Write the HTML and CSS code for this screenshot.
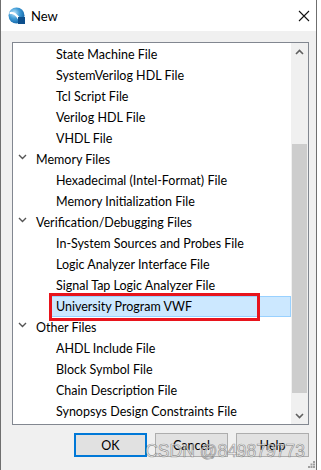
FILE: index.html
```html
<!DOCTYPE html>
<html>
<head>
<meta charset="utf-8">
<link rel="stylesheet" href="styles.css">
</head>
<body>
<div class="window">
  <div class="titlebar">
    <svg class="appicon" width="18" height="18" viewBox="0 0 18 18">
      <defs>
        <radialGradient id="g" cx="0.35" cy="0.35" r="0.7">
          <stop offset="0" stop-color="#bfe6fb"/>
          <stop offset="0.5" stop-color="#3f9bd6"/>
          <stop offset="1" stop-color="#1466a8"/>
        </radialGradient>
      </defs>
      <circle cx="8.5" cy="8.5" r="8" fill="url(#g)"/>
      <path d="M2.5 6 C5 5 9 8 11 12" stroke="#ffffff" stroke-width="2.2" fill="none" stroke-linecap="round"/>
      <rect x="10" y="10" width="7" height="7" fill="#0d4f8c"/>
    </svg>
    <span class="title">New</span>
    <svg class="close" width="12" height="12" viewBox="0 0 12 12">
      <path d="M1 1 L11 11 M11 1 L1 11" stroke="#111" stroke-width="1.1"/>
    </svg>
  </div>
  <div class="body">
    <div class="listbox">
      <div class="tree">
        <div class="row child">State Machine File</div>
        <div class="row child">SystemVerilog HDL File</div>
        <div class="row child">Tcl Script File</div>
        <div class="row child">Verilog HDL File</div>
        <div class="row child">VHDL File</div>
        <div class="row cat"><svg class="chev" width="9" height="6" viewBox="0 0 9 6"><path d="M1 1 L4.5 4.5 L8 1" stroke="#555" stroke-width="1.4" fill="none"/></svg>Memory Files</div>
        <div class="row child">Hexadecimal (Intel-Format) File</div>
        <div class="row child">Memory Initialization File</div>
        <div class="row cat"><svg class="chev" width="9" height="6" viewBox="0 0 9 6"><path d="M1 1 L4.5 4.5 L8 1" stroke="#555" stroke-width="1.4" fill="none"/></svg>Verification/Debugging Files</div>
        <div class="row child">In-System Sources and Probes File</div>
        <div class="row child">Logic Analyzer Interface File</div>
        <div class="row child">Signal Tap Logic Analyzer File</div>
        <div class="row selwrap"><div class="selected">University Program VWF</div><div class="redbox"></div></div>
        <div class="row cat"><svg class="chev" width="9" height="6" viewBox="0 0 9 6"><path d="M1 1 L4.5 4.5 L8 1" stroke="#555" stroke-width="1.4" fill="none"/></svg>Other Files</div>
        <div class="row child">AHDL Include File</div>
        <div class="row child">Block Symbol File</div>
        <div class="row child">Chain Description File</div>
        <div class="row child">Synopsys Design Constraints File</div>
      </div>
      <div class="scrollbar">
        <div class="arrow"><svg width="9" height="6" viewBox="0 0 9 6"><path d="M1 5 L4.5 1.5 L8 5" stroke="#606060" stroke-width="1.6" fill="none"/></svg></div>
        <div class="track"><div class="thumb"></div></div>
        <div class="arrow"><svg width="9" height="6" viewBox="0 0 9 6"><path d="M1 1 L4.5 4.5 L8 1" stroke="#606060" stroke-width="1.6" fill="none"/></svg></div>
      </div>
    </div>
    <div class="buttons">
      <div class="btn default">OK</div>
      <div class="btn">Cancel</div>
      <div class="btn">Help</div>
    </div>
    <div class="watermark">CSDN @849879773</div>
    <svg class="grip" width="7" height="7" viewBox="0 0 7 7">
      <rect x="5" y="0" width="2" height="2" fill="#a0a0a0"/>
      <rect x="2.5" y="2.5" width="2" height="2" fill="#a0a0a0"/>
      <rect x="5" y="2.5" width="2" height="2" fill="#a0a0a0"/>
      <rect x="0" y="5" width="2" height="2" fill="#a0a0a0"/>
      <rect x="2.5" y="5" width="2" height="2" fill="#a0a0a0"/>
      <rect x="5" y="5" width="2" height="2" fill="#a0a0a0"/>
    </svg>
  </div>
</div>
</body>
</html>
```
FILE: styles.css
```css
html, body {
  margin: 0;
  padding: 0;
  background: #ffffff;
}
body {
  width: 321px;
  height: 470px;
  overflow: hidden;
  font-family: Lato, "Noto Sans", sans-serif;
  font-size: 12.5px;
  color: #000;
}
.window {
  box-sizing: border-box;
  width: 317px;
  height: 470px;
  border-left: 1px solid #6f6f6f;
  border-right: 1px solid #6f6f6f;
  display: flex;
  flex-direction: column;
}
.titlebar {
  height: 31px;
  flex: none;
  background: #ffffff;
  display: flex;
  align-items: center;
  padding-left: 7px;
  padding-right: 6px;
}
.appicon {
  margin-right: 5px;
  margin-top: 1px;
}
.title {
  font-size: 13px;
  flex: 1;
  margin-top: 1px;
}
.close {
  margin-top: 1px;
}
.body {
  flex: 1;
  background: #f0f0f0;
  padding: 11px 7px 0 11px;
  position: relative;
  display: flex;
  flex-direction: column;
}
.listbox {
  height: 383px;
  box-sizing: border-box;
  border: 1px solid #828790;
  background: #fff;
  display: flex;
}
.tree {
  flex: 1;
  padding-top: 1px;
}
.row {
  height: 21px;
  line-height: 21px;
  white-space: nowrap;
  display: flex;
  align-items: center;
}
.child {
  padding-left: 43px;
}
.cat {
  padding-left: 5px;
}
.chev {
  margin-right: 9px;
  margin-top: -5px;
}
.selwrap {
  position: relative;
  padding-left: 38px;
}
.selected {
  box-sizing: border-box;
  flex: 1;
  height: 21px;
  line-height: 19px;
  background: #cce8ff;
  border: 1px solid #99d1ff;
  padding-left: 4px;
}
.redbox {
  position: absolute;
  left: 36px;
  top: -3px;
  width: 211px;
  height: 28px;
  box-sizing: border-box;
  border: 3px solid #e8141c;
}
.scrollbar {
  width: 17px;
  background: #f0f0f0;
  display: flex;
  flex-direction: column;
}
.arrow {
  height: 17px;
  display: flex;
  align-items: center;
  justify-content: center;
}
.track {
  flex: 1;
  padding: 0 1px;
}
.thumb {
  margin-top: 84px;
  height: 249px;
  background: #cdcdcd;
}
.buttons {
  display: flex;
  justify-content: flex-end;
  gap: 8px;
  margin-top: 8px;
}
.btn {
  box-sizing: border-box;
  width: 73px;
  height: 24px;
  background: #e1e1e1;
  border: 1px solid #adadad;
  display: flex;
  align-items: center;
  justify-content: center;
}
.btn.default {
  border: 2px solid #0078d7;
}
.watermark {
  position: absolute;
  right: 11px;
  bottom: 9px;
  font-family: "Liberation Sans", Arial, sans-serif;
  font-size: 17.5px;
  line-height: 20px;
  color: rgba(255, 255, 255, 0.6);
  -webkit-text-stroke: 0.7px rgba(100, 100, 100, 0.65);
}
.grip {
  position: absolute;
  right: 1px;
  bottom: 2px;
}
```
